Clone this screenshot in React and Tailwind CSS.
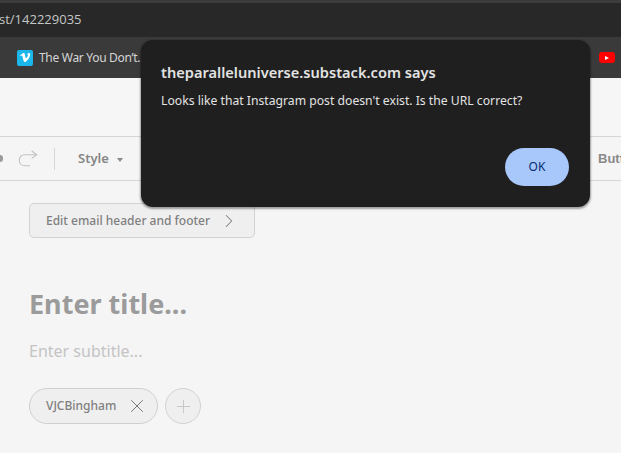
import React from "react";
import { ChevronRight, X, Plus } from "lucide-react";

const App = () => {
  return (
    <div className="relative w-[621px] h-[453px] overflow-hidden bg-[#f5f5f5] font-['Noto_Sans',sans-serif]">
      {/* Browser chrome */}
      <div className="h-[3px] bg-[#3c3c3c]" />
      <div className="h-[34px] bg-[#282828] flex items-center">
        <span className="text-[13px] text-[#c4c7c5] ml-[-1px] font-['Open_Sans',sans-serif]">st/142229035</span>
      </div>
      <div className="h-[41px] bg-[#3a3a3a] flex items-center justify-between pl-[17px] pr-[6px]">
        <div className="flex items-center gap-[6px]">
          <div className="w-4 h-4 rounded-[2px] bg-[#1ab7ea] flex items-center justify-center">
            <svg width="12" height="11" viewBox="0 0 12 11">
              <path d="M1 3.4 L1.6 4.1 C2.6 3.4 3 3.3 3.3 4 L4.6 8.8 C5 9.8 5.7 10.3 6.4 9.9 C8 8.9 10.6 6 11.2 3 C11.6 0.9 9.4 0 7.7 2.8 C8.9 2.2 9.5 3 8.7 4.3 C8 5.5 7.4 6.3 7 6.3 C6.6 6.3 6.2 3.8 5.8 2.2 C5.4 0.6 4.3 0.8 3.4 1.4 Z" fill="#ffffff" />
            </svg>
          </div>
          <span className="text-[12px] tracking-[-0.3px] text-[#d5d5d5] whitespace-nowrap">The War You Don’t...</span>
        </div>
        <div className="w-[16px] h-[11px] rounded-[3px] bg-[#f00] flex items-center justify-center">
          <div className="w-0 h-0 border-y-[2.5px] border-y-transparent border-l-[4px] border-l-white" />
        </div>
      </div>

      {/* Page header */}
      <div className="h-[58px] bg-[#f6f6f6]" />

      {/* Editor toolbar */}
      <div className="h-[45px] border-y border-[#d6d6d6] flex items-center justify-between">
        <div className="flex items-center">
          <div className="w-[3px] h-[7px] rounded-r-full bg-[#9a9a9a]" />
          <svg width="20" height="17" viewBox="0 0 20 17" fill="none" stroke="#c2c2c2" strokeWidth="1.1" className="ml-[15px]">
            <path d="M13.7 1 L18.7 4.7 L13.7 8.4" />
            <path d="M18.7 4.7 H7 C3.6 4.7 1.3 7 1.3 10.2 C1.3 13.4 3.6 15.7 7 15.7 H12" />
          </svg>
          <div className="w-px h-[22px] bg-[#d6d6d6] ml-[16px]" />
          <span className="ml-[23px] text-[13px] font-semibold text-[#868686]">Style</span>
          <div className="ml-[8px] mt-[2px] w-0 h-0 border-x-[3.5px] border-x-transparent border-t-[4px] border-t-[#8a8a8a]" />
        </div>
        <span className="text-[13px] font-semibold text-[#8a8a8a] whitespace-nowrap mr-[-3px] font-['Liberation_Sans',sans-serif]">Butt</span>
      </div>

      {/* Editor body */}
      <div className="pl-[29px] pt-[22px]">
        <div className="w-[226px] h-[35px] rounded-[5px] border border-[#d2d2d2] bg-[#efefef] flex items-center justify-between pl-4 pr-[14px]">
          <span className="text-[12px] font-medium text-[#7f7f7f] whitespace-nowrap">Edit email header and footer</span>
          <ChevronRight size={22} strokeWidth={1.1} className="text-[#7f7f7f]" />
        </div>
        <div className="mt-[49px] text-[27px] leading-[34px] font-bold text-[#9b9b9b]">Enter title...</div>
        <div className="mt-[19px] text-[16px] leading-[22px] text-[#c4c4c4]">Enter subtitle...</div>
        <div className="mt-[26px] flex items-center gap-[7px]">
          <div className="w-[129px] h-[36px] rounded-full border border-[#cfcfcf] bg-[#efefef] flex items-center justify-between pl-4 pr-[9px]">
            <span className="text-[12px] font-medium text-[#7f7f7f]">VJCBingham</span>
            <X size={22} strokeWidth={1} className="text-[#6f6f6f]" />
          </div>
          <div className="w-[36px] h-[36px] rounded-full border border-[#d2d2d2] bg-[#efefef] flex items-center justify-center">
            <Plus size={21} strokeWidth={1} className="text-[#c4c4c4]" />
          </div>
        </div>
      </div>

      {/* Alert dialog */}
      <div className="absolute left-[141px] top-[40px] w-[449px] h-[167px] rounded-[12px] bg-[#1f1f1f] shadow-[0_1px_2px_1px_rgba(0,0,0,0.35)] pl-5 pr-[21px] pt-[21px]">
        <div className="text-[14.6px] leading-[22px] font-semibold text-[#e3e3e3] whitespace-nowrap">theparalleluniverse.substack.com says</div>
        <div className="mt-[8px] text-[12.2px] leading-[20px] text-[#e3e3e3] whitespace-nowrap">Looks like that Instagram post doesn't exist. Is the URL correct?</div>
        <div className="mt-[37px] flex justify-end">
          <button className="w-[64px] h-[38px] rounded-full bg-[#a8c7fa] text-[12px] font-normal text-[#062e6f]">OK</button>
        </div>
      </div>
    </div>
  );
};

export default App;
